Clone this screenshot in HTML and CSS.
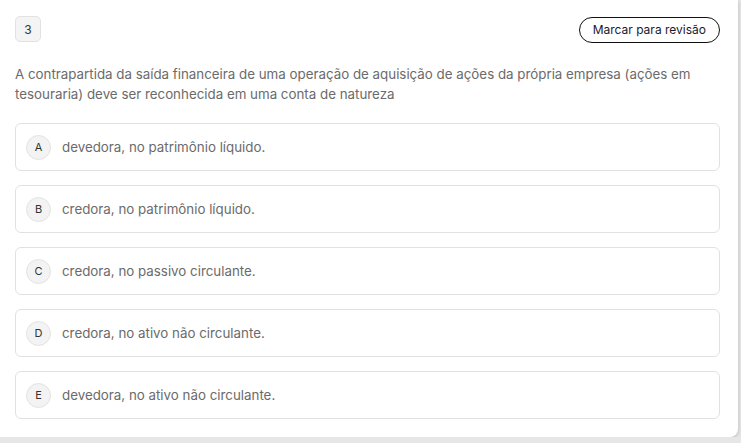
FILE: index.html
```html
<!DOCTYPE html>
<html lang="pt-BR">
<head>
    <meta charset="UTF-8">
    <title>Questão 3</title>
    <link rel="stylesheet" href="styles.css">
</head>
<body>

<div class="question-card">
    <div class="question-head">
        <span class="question-number">3</span>
        <button class="review-btn">Marcar para revisão</button>
    </div>

    <p class="question-text">A contrapartida da saída financeira de uma operação de aquisição de ações da própria empresa (ações em tesouraria) deve ser reconhecida em uma conta de natureza</p>

    <div class="options">
        <div class="option">
            <span class="option-letter">A</span>
            <span class="option-text">devedora, no patrimônio líquido.</span>
        </div>
        <div class="option">
            <span class="option-letter">B</span>
            <span class="option-text">credora, no patrimônio líquido.</span>
        </div>
        <div class="option">
            <span class="option-letter">C</span>
            <span class="option-text">credora, no passivo circulante.</span>
        </div>
        <div class="option">
            <span class="option-letter">D</span>
            <span class="option-text">credora, no ativo não circulante.</span>
        </div>
        <div class="option">
            <span class="option-letter">E</span>
            <span class="option-text">devedora, no ativo não circulante.</span>
        </div>
    </div>
</div>

</body>
</html>
```

FILE: styles.css
```css
body {
    margin: 0;
    background-color: #e6e6e6;
    font-family: Inter, "Liberation Sans", sans-serif;
    color: #6b6b6b;
}

.question-card {
    width: 738px;
    height: 437px;
    box-sizing: border-box;
    background-color: #fff;
    border-radius: 0 0 8px 0;
    box-shadow: 0 1px 4px rgba(0, 0, 0, 0.2);
    padding: 16px 18px 0 15px;
}

.question-head {
    display: flex;
    justify-content: space-between;
    align-items: center;
    height: 26px;
}

.question-number {
    width: 26px;
    height: 26px;
    box-sizing: border-box;
    display: flex;
    align-items: center;
    justify-content: center;
    background-color: #f4f4f4;
    border: 1px solid #e2e2e2;
    border-radius: 5px;
    font-size: 12px;
    color: #333;
}

.review-btn {
    margin-top: 1px;
    height: 26px;
    padding: 0 13px;
    background: #fff;
    border: 1px solid #111;
    border-radius: 13px;
    font-family: inherit;
    font-size: 12px;
    color: #1a1a2e;
    cursor: pointer;
}

.question-text {
    margin: 22px 0 0;
    font-size: 13.33px;
    line-height: 20px;
}

.options {
    display: flex;
    flex-direction: column;
    gap: 14px;
    margin-top: 19px;
}

.option {
    height: 48px;
    box-sizing: border-box;
    display: flex;
    align-items: center;
    gap: 11px;
    padding: 0 10px;
    border: 1px solid #e1e1e1;
    border-radius: 6px;
}

.option-letter {
    width: 25px;
    height: 25px;
    box-sizing: border-box;
    display: flex;
    align-items: center;
    justify-content: center;
    background-color: #f3f3f3;
    border: 1px solid #e3e3e3;
    border-radius: 50%;
    font-size: 11px;
    color: #333;
}

.option-text {
    font-size: 13.33px;
}
```
